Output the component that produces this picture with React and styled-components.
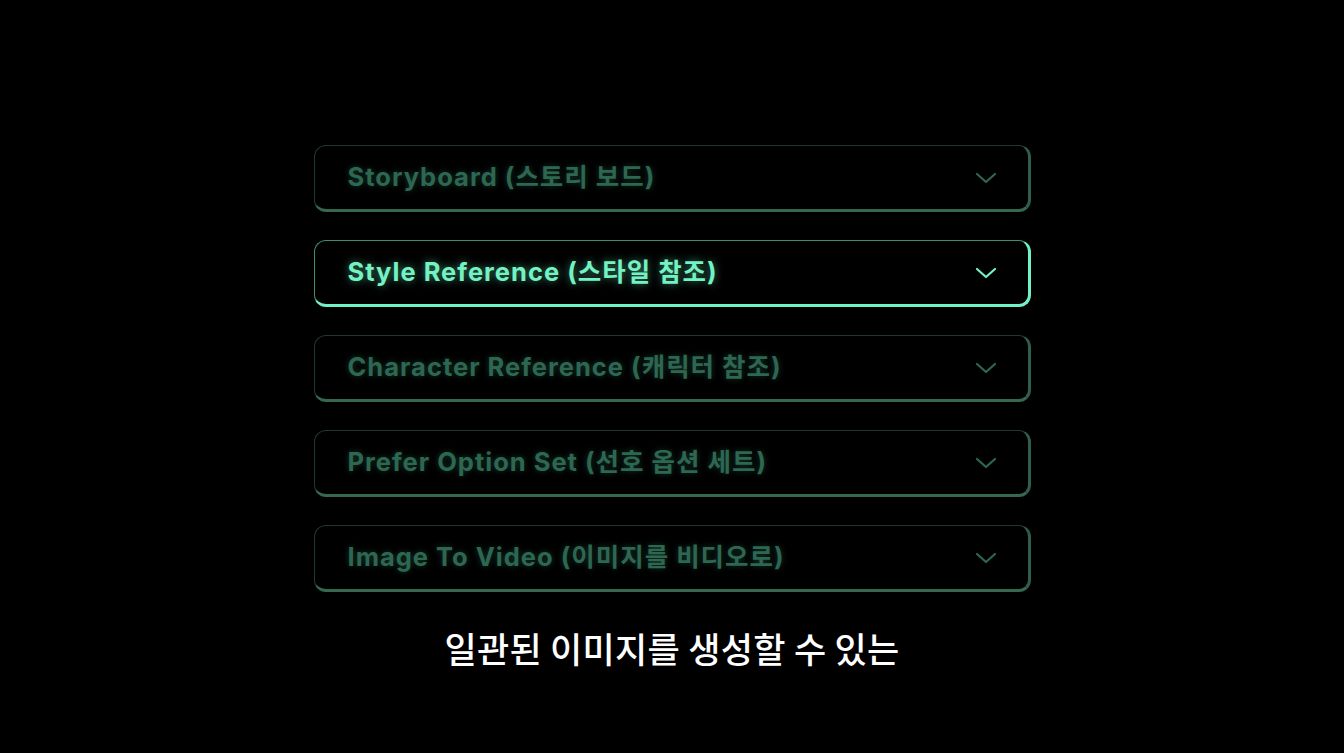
import React from 'react';
import styled, { createGlobalStyle, css } from 'styled-components';

const Global = createGlobalStyle`
  html, body { margin: 0; padding: 0; background: #000; }
  body { font-family: "Noto Sans", "Noto Sans CJK KR", sans-serif; }
`;

const Page = styled.div`
  width: 1344px;
  height: 753px;
  background: #000;
  display: flex;
  flex-direction: column;
  align-items: center;
  padding-top: 145px;
  box-sizing: border-box;
`;

const List = styled.div`
  display: flex;
  flex-direction: column;
  gap: 28px;
  width: 717px;
`;

const Card = styled.div`
  height: 67px;
  box-sizing: border-box;
  border-radius: 12px;
  border-style: solid;
  border-width: 1px 3px 3px 1px;
  border-color: #1d3a2f #2f5e4c #35684f #1d3a2f;
  display: flex;
  align-items: center;
  justify-content: space-between;
  padding: 0 31px 2px 33px;
  ${p => p.$active && css`
    border-color: #3c8f70 #6ff3c4 #6ff3c4 #3c8f70;
  `}
`;

const Title = styled.span`
  font-family: "Inter", "Noto Sans CJK KR", sans-serif;
  font-weight: 700;
  font-size: 25.5px;
  letter-spacing: 1px;
  margin-bottom: 4px;
  color: #2d6752;
  text-shadow: 0 0 6px rgba(60, 160, 120, 0.35);
  ${p => p.$active && css`
    color: #73f2c3;
    text-shadow: 0 0 8px rgba(110, 240, 190, 0.55);
  `}
`;

const ChevronBox = styled.span`
  display: flex;
  margin-top: 2px;
`;

const Chevron = ({ active }) => (
  <ChevronBox>
    <svg width="22" height="12" viewBox="0 0 22 12" fill="none">
      <path d="M2 2 L11 10 L20 2" stroke={active ? '#73f2c3' : '#2d6752'} strokeWidth="2.2" strokeLinecap="round" strokeLinejoin="round" />
    </svg>
  </ChevronBox>
);

const Caption = styled.div`
  margin-top: 30px;
  font-family: "Noto Sans CJK KR", sans-serif;
  font-weight: 500;
  font-size: 35px;
  color: #fff;
  letter-spacing: 0.3px;
`;

const items = [
  'Storyboard (스토리 보드)',
  'Style Reference (스타일 참조)',
  'Character Reference (캐릭터 참조)',
  'Prefer Option Set (선호 옵션 세트)',
  'Image To Video (이미지를 비디오로)',
];

export default function App() {
  return (
    <>
      <Global />
      <Page>
        <List>
          {items.map((t, i) => (
            <Card key={t} $active={i === 1}>
              <Title $active={i === 1}>{t}</Title>
              <Chevron active={i === 1} />
            </Card>
          ))}
        </List>
        <Caption>일관된 이미지를 생성할 수 있는</Caption>
      </Page>
    </>
  );
}
